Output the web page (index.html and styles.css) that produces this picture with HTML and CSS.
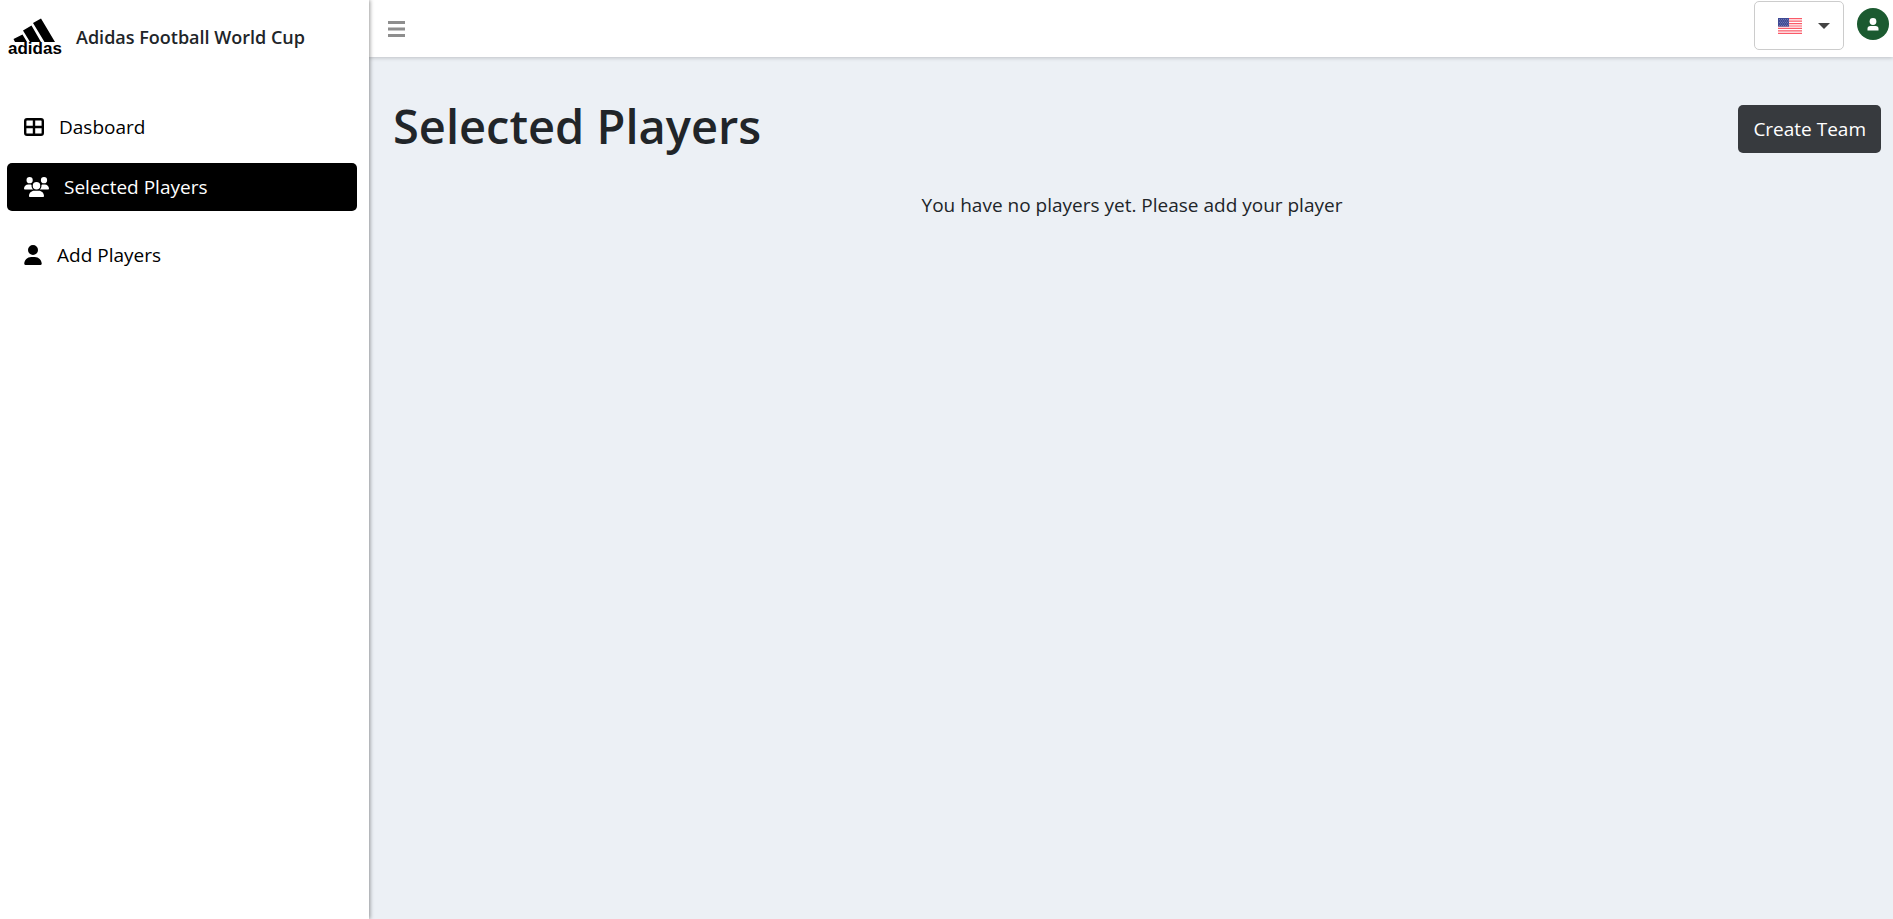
FILE: index.html
```html
<!DOCTYPE html>
<html lang="en">
<head>
<meta charset="utf-8">
<meta name="viewport" content="width=device-width, initial-scale=1">
<title>Selected Players</title>
<link rel="stylesheet" href="styles.css">
</head>
<body>
<div class="app">
  <aside class="sidebar">
    <div class="brand">
      <svg class="brand-logo" width="56" height="40" viewBox="0 0 56 40" role="img" aria-label="adidas">
        <path d="M25 6l8-4.500 14 23.500H36.500zM15 13.500l8.500-5 9.500 16.500H22zM5.500 22l9-4.500L19 25H7z"/>
        <text class="brand-mark" x="0" y="37">adidas</text>
      </svg>
      <span class="brand-name">Adidas Football World Cup</span>
    </div>
    <nav class="menu">
      <a class="menu-item" href="#dashboard">
        <svg width="20" height="18" viewBox="0 0 20 18" fill="none" stroke="currentColor" stroke-width="2.4" aria-hidden="true"><rect x="1.2" y="1.2" width="17.6" height="15.6" rx="1.8"/><path d="M10 1v16M1 9h18"/></svg>
        <span>Dasboard</span>
      </a>
      <a class="menu-item active" href="#selected" aria-current="page">
        <svg width="25" height="20" viewBox="0 0 640 512" fill="currentColor" aria-hidden="true"><path d="M144 0a80 80 0 1 1 0 160A80 80 0 1 1 144 0zM512 0a80 80 0 1 1 0 160A80 80 0 1 1 512 0zM0 298.700C0 239.800 47.800 192 106.700 192h42.700c15.900 0 31 3.500 44.600 9.700c-1.300 7.200-1.900 14.700-1.900 22.300c0 38.200 16.800 72.500 43.300 96H21.300C9.600 320 0 310.400 0 298.700zM405.300 320h-.7c26.600-23.500 43.300-57.800 43.300-96c0-7.600-.7-15-1.900-22.300c13.600-6.300 28.700-9.700 44.600-9.700h42.700C592.200 192 640 239.800 640 298.700c0 11.800-9.600 21.300-21.300 21.300H405.300zM224 224a96 96 0 1 1 192 0a96 96 0 1 1-192 0zM128 485.300C128 411.700 187.700 352 261.300 352h117.400C452.300 352 512 411.700 512 485.300c0 14.700-11.900 26.700-26.700 26.700H154.700c-14.700 0-26.700-11.900-26.700-26.700z"/></svg>
        <span>Selected Players</span>
      </a>
      <a class="menu-item spaced" href="#add">
        <svg width="18" height="20" viewBox="0 0 448 512" fill="currentColor" aria-hidden="true"><path d="M224 256A128 128 0 1 0 224 0a128 128 0 1 0 0 256zm-45.700 48C79.800 304 0 383.800 0 482.300C0 498.700 13.300 512 29.700 512h388.600c16.400 0 29.700-13.300 29.700-29.700C448 383.800 368.200 304 269.700 304h-91.400z"/></svg>
        <span>Add Players</span>
      </a>
    </nav>
  </aside>
  <div class="content">
    <header class="topbar">
      <button class="toggle" type="button" aria-label="Toggle menu">
        <svg width="17" height="16" viewBox="0 0 17 16" fill="currentColor" aria-hidden="true"><path d="M0 0h17v3H0zM0 6.500h17v3H0zM0 13h17v3H0z"/></svg>
      </button>
      <div class="tools">
        <label class="language">
          <svg width="24" height="16" viewBox="0 0 24 16" aria-hidden="true">
            <path fill="#fff" d="M0 0h24v16H0z"/>
            <path stroke="#fa5a68" stroke-width="1.230" d="M0 .6h24M0 3.080h24M0 5.540h24M0 8h24M0 10.460h24M0 12.920h24M0 15.400h24"/>
            <path fill="#3f4a94" d="M0 0h11v8.600H0z"/>
            <path stroke="#a5acd6" stroke-width=".7" stroke-dasharray=".7 1.300" d="M1 1.500h10M2 3h9M1 4.500h10M2 6h9M1 7.500h10"/>
          </svg>
          <svg width="12" height="6" viewBox="0 0 12 6" aria-hidden="true"><path fill="#444" d="M0 0h12L6 6z"/></svg>
          <select class="language-select" aria-label="Language"><option>English</option></select>
        </label>
        <button class="avatar" type="button" aria-label="Account">
          <svg width="12" height="13" viewBox="0 0 12 13" fill="currentColor" aria-hidden="true"><circle cx="6" cy="3.500" r="3.400"/><path d="M.5 12.500v-1.700Q.5 8 3.500 8h5q3 0 3 2.800v1.700z"/></svg>
        </button>
      </div>
    </header>
    <main class="page">
      <div class="page-head">
        <h1 class="title">Selected Players</h1>
        <button class="create" type="button">Create Team</button>
      </div>
      <p class="empty">You have no players yet. Please add your player</p>
    </main>
  </div>
</div>
</body>
</html>
```
FILE: styles.css
```css
* { box-sizing: border-box; }
body {
  margin: 0;
  background: #ecf0f5;
  color: #212529;
  font-family: "Open Sans", "Noto Sans", sans-serif;
  font-size: 19px;
  line-height: 28px;
}
button { border: 0; font: inherit; cursor: pointer; }
svg { display: block; flex: none; }
.app { display: flex; min-height: 100vh; }
.sidebar {
  position: relative;
  flex: 0 0 369px;
  background: #fff;
  box-shadow: 1px 0 4px rgba(0, 0, 0, .4);
  z-index: 2;
}
.brand { display: flex; align-items: center; gap: 12px; height: 73px; padding-left: 8px; }
.brand-mark { font: bold 17px "Liberation Sans", Arial, sans-serif; }
.brand-name { font-size: 18px; font-weight: 600; }
.menu { display: flex; flex-direction: column; gap: 12px; padding: 30px 12px 0 7px; }
.menu-item {
  display: flex;
  align-items: center;
  gap: 15px;
  height: 48px;
  padding: 0 17px;
  border-radius: 5px;
  color: #000;
  text-decoration: none;
}
.menu-item.active { background: #000; color: #fff; }
.menu-item.spaced { margin-top: 8px; }
.content { flex: 1; min-width: 0; }
.topbar {
  display: flex;
  justify-content: space-between;
  height: 57px;
  padding: 0 4px 0 12px;
  background: #fff;
  box-shadow: 0 1px 4px rgba(0, 0, 0, .2);
}
.toggle { padding: 0 7px; background: none; color: #8e8e8e; }
.tools { display: flex; gap: 13px; }
.language {
  position: relative;
  display: flex;
  align-items: center;
  gap: 16px;
  height: 49px;
  margin-top: 1px;
  padding: 0 13px 0 23px;
  border: 1px solid #ccc;
  border-radius: 5px;
}
.language-select { position: absolute; inset: 0; width: 100%; opacity: 0; cursor: pointer; }
.avatar {
  display: grid;
  place-items: center;
  width: 32px;
  height: 32px;
  margin-top: 8px;
  padding: 0;
  border-radius: 50%;
  background: #1b5a30;
  color: #fff;
}
.page { padding: 36px 12px 24px 24px; }
.page-head { display: flex; justify-content: space-between; align-items: flex-start; }
.title { margin: 0; font-size: 47px; font-weight: 600; line-height: 66px; }
.create { height: 48px; margin-top: 12px; padding: 0 15px; border-radius: 5px; background: #373a3e; color: #fff; }
.empty { margin: 32px 0 0; padding-right: 10px; text-align: center; }
```
